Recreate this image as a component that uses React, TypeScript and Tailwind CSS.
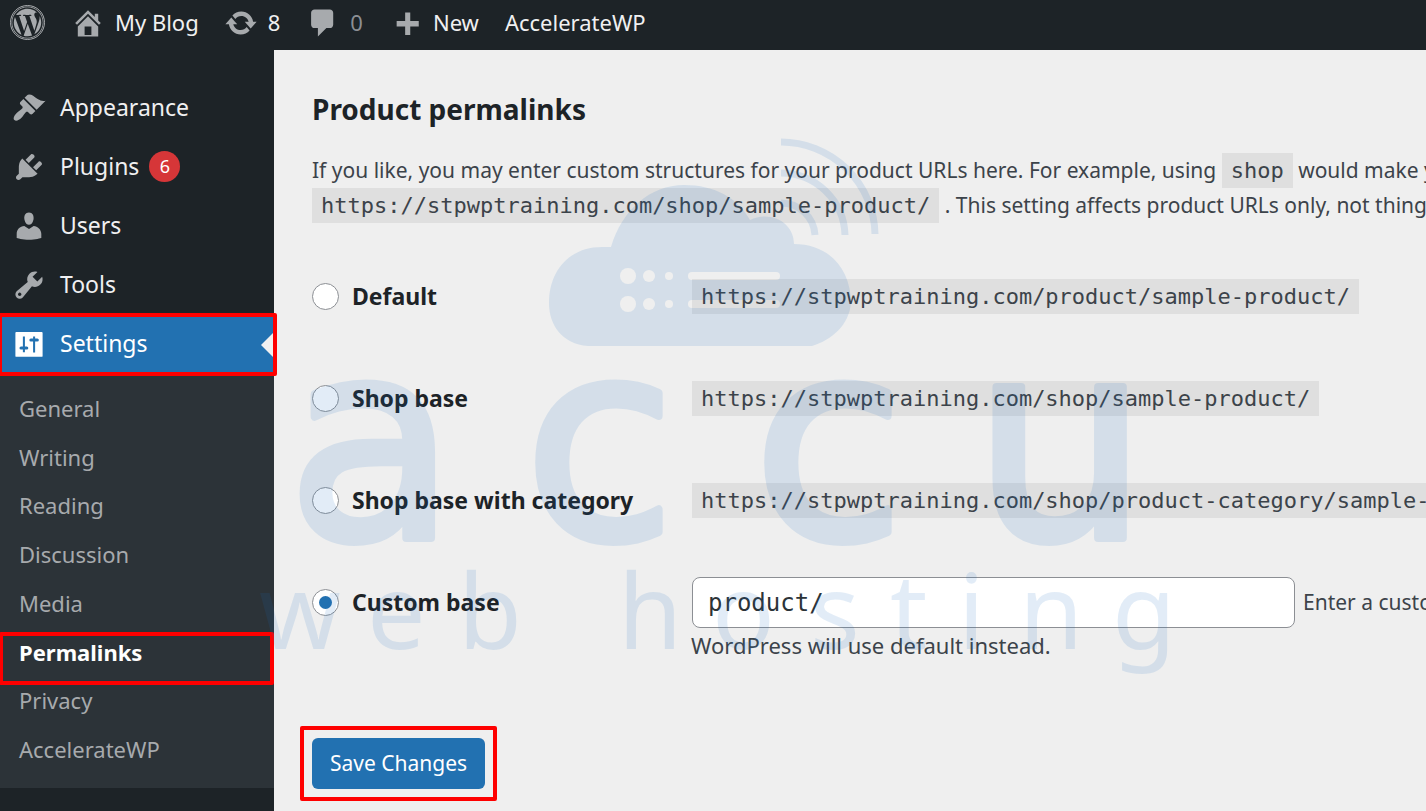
import React, { useState } from 'react';
import { FaWordpress } from 'react-icons/fa';

const icons = {
  home: 'M16 8.5l1.53 1.53-1.06 1.06L10 4.6l-6.47 6.49-1.06-1.06L10 2.5l4 4v-2h2v4zm-6-2.46l6 5.99V18H4v-5.97zM12 17v-5H8v5h4z',
  update: 'M10.2 3.28c3.53 0 6.43 2.61 6.92 6h2.08l-3.5 4-3.5-4h2.32c-.45-1.97-2.21-3.45-4.32-3.45-1.45 0-2.73.71-3.54 1.78L4.95 5.66C6.23 4.2 8.11 3.28 10.2 3.28zm-.4 13.44c-3.52 0-6.43-2.61-6.92-6H.8l3.5-4c1.17 1.33 2.33 2.67 3.5 4H5.48c.45 1.97 2.21 3.45 4.32 3.45 1.45 0 2.73-.71 3.54-1.78l1.71 1.95c-1.28 1.46-3.15 2.38-5.25 2.38z',
  comment: 'M5 2h9c1.1 0 2 .9 2 2v7c0 1.1-.9 2-2 2h-2l-5 5v-5H5c-1.1 0-2-.9-2-2V4c0-1.1.9-2 2-2z',
  plus: 'M17.5 8.8v3.2h-5v5h-3v-5h-5V8.8h5v-5h3v5z',
  appearance: 'M14.48 11.06L7.41 3.99l1.5-1.5c.5-.56 2.3-.47 3.51.32 1.21.8 1.43 1.28 2.91 2.1 1.18.64 2.45 1.26 4.45.85zm-.71.71L6.7 4.7 4.93 6.47c-.39.39-.39 1.02 0 1.41l1.06 1.06c.39.39.39 1.03 0 1.42-.6.6-1.43 1.11-2.21 1.69-.35.26-.7.53-1.01.84C1.43 14.23.4 16.08 1.4 17.07c.99 1 2.84-.03 4.18-1.36.31-.31.58-.66.85-1.02.57-.78 1.08-1.61 1.69-2.21.39-.39 1.02-.39 1.41 0l1.06 1.06c.39.39 1.02.39 1.41 0z',
  plugins: 'M13.11 4.36L9.87 7.6 8 5.73l3.24-3.24c.35-.34 1.05-.2 1.56.32.52.51.66 1.21.31 1.55zm-8 1.77l.91-1.12 9.01 9.01-1.19.84c-.71.71-2.63 1.16-3.82 1.16H6.14L4.9 17.26c-.59.59-1.54.59-2.12 0-.59-.58-.59-1.53 0-2.12l1.24-1.24v-3.88c0-1.13.4-3.19 1.09-3.89zm7.26 3.97l3.24-3.24c.34-.35 1.04-.21 1.55.31.52.51.66 1.21.31 1.55l-3.24 3.25z',
  users: 'M10 9.25c-2.27 0-2.73-3.44-2.73-3.44C7 4.02 7.82 2 9.97 2c2.16 0 2.98 2.02 2.71 3.81 0 0-.41 3.44-2.68 3.44zm0 2.57L12.72 10c2.39 0 4.52 2.33 4.52 4.53v2.49s-3.65 1.13-7.24 1.13c-3.65 0-7.24-1.13-7.24-1.13v-2.49c0-2.25 1.94-4.48 4.47-4.48z',
  tools: 'M16.68 9.77c-1.34 1.34-3.3 1.67-4.95.99l-5.41 6.52c-.99.99-2.59.99-3.58 0s-.99-2.59 0-3.57l6.52-5.42c-.68-1.65-.35-3.61.99-4.95 1.28-1.28 3.12-1.62 4.72-1.06l-2.89 2.89 2.82 2.82 2.86-2.87c.53 1.58.18 3.39-1.08 4.65zM3.81 16.21c.4.39 1.04.39 1.43 0 .4-.4.4-1.04 0-1.43-.39-.4-1.03-.4-1.43 0-.39.39-.39 1.03 0 1.43z',
  settings: 'M2.5 3h15a.5.5 0 0 1 .5.5v13.5a.5.5 0 0 1-.5.5h-15a.5.5 0 0 1-.5-.5V3.5a.5.5 0 0 1 .5-.5zM6.4 5.6v5.8H5.3a.9.9 0 0 0 0 1.8h1.1v1.7h1.2v-1.7h1.1a.9.9 0 0 0 0-1.8H7.6V5.6zM12.4 5.6v1.2h-1.3a.9.9 0 0 0 0 1.8h1.3v6.4h1.2V8.6h1.3a.9.9 0 0 0 0-1.8h-1.3V5.6z',
};

type IconName = keyof typeof icons;

const Icon = ({ name }: { name: IconName }) => (
  <svg viewBox="0 0 20 20" className="size-[34px] shrink-0" fill="currentColor" fillRule="evenodd" aria-hidden="true">
    <path d={icons[name]} />
  </svg>
);

const menu: { label: string; icon: IconName; count?: number }[] = [
  { label: 'Appearance', icon: 'appearance' },
  { label: 'Plugins', icon: 'plugins', count: 6 },
  { label: 'Users', icon: 'users' },
  { label: 'Tools', icon: 'tools' },
  { label: 'Settings', icon: 'settings' },
];

const submenu = ['General', 'Writing', 'Reading', 'Discussion', 'Media', 'Permalinks', 'Privacy', 'AccelerateWP'];

const structures = [
  { id: 'default', label: 'Default', url: 'https://stpwptraining.com/product/sample-product/' },
  { id: 'shop', label: 'Shop base', url: 'https://stpwptraining.com/shop/sample-product/' },
  { id: 'category', label: 'Shop base with category', url: 'https://stpwptraining.com/shop/product-category/sample-product/' },
  { id: 'custom', label: 'Custom base' },
];

const AdminBar = () => (
  <header className="flex h-[50px] items-center bg-[#1d2327] pb-[5px] pl-[10px] text-[22px] whitespace-nowrap text-[#f0f0f1]">
    <a href="#about" aria-label="About WordPress" className="text-[#a7aaad]">
      <FaWordpress className="size-[35px] rounded-full border border-current" />
    </a>
    <a href="#site" className="ml-[26px] flex items-center gap-[10px]">
      <span className="text-[#a7aaad]"><Icon name="home" /></span>
      My Blog
    </a>
    <a href="#updates" className="ml-[25px] flex items-center gap-[10px]">
      <span className="text-[#a7aaad]"><Icon name="update" /></span>
      8
    </a>
    <a href="#comments" className="ml-[26px] flex items-center gap-[10px] text-[#8c8f94]">
      <span className="text-[#a7aaad]"><Icon name="comment" /></span>
      0
    </a>
    <a href="#new" className="ml-[26px] flex items-center gap-[10px]">
      <span className="text-[#a7aaad]"><Icon name="plus" /></span>
      New
    </a>
    <a href="#accelerate" className="ml-[26px]">AccelerateWP</a>
  </header>
);

const Sidebar = () => (
  <nav className="w-[274px] shrink-0 bg-[#1d2327] pt-[29px]" aria-label="Main menu">
    <ul>
      {menu.map(item => {
        const active = item.label === 'Settings';
        return (
          <li key={item.label} className="relative">
            <a
              href={`#${item.label.toLowerCase()}`}
              className={`flex h-[59px] items-center pb-[2px] pl-[12px] text-[23px] ${active ? 'bg-[#2271b1] text-white' : 'text-[#f0f0f1]'}`}
            >
              <span className={active ? 'text-white' : 'text-[#a7aaad]'}><Icon name={item.icon} /></span>
              <span className="ml-[14px]">{item.label}</span>
              {item.count && (
                <span className="ml-[10px] flex size-[31px] items-center justify-center rounded-full bg-[#d63638] text-[18px] text-white">
                  {item.count}
                </span>
              )}
            </a>
            {active && (
              <>
                <span className="absolute top-1/2 right-0 -translate-y-1/2 border-y-[13px] border-r-[13px] border-y-transparent border-r-[#f0f0f1]" />
                <span className="absolute -inset-y-[2px] -right-[3px] -left-[2px] z-10 rounded-xs border-4 border-[#fe0000]" />
              </>
            )}
          </li>
        );
      })}
    </ul>
    <ul className="flex min-h-[414px] flex-col bg-[#2c3338] pt-[10px] pb-[14px] text-[22px] text-[#a7aaad]">
      {submenu.map(label => {
        const current = label === 'Permalinks';
        return (
          <li key={label} className="relative flex flex-1 items-center">
            <a href={`#${label.toLowerCase()}`} className={`pl-[19px] ${current ? 'font-bold text-white' : ''}`}>
              {label}
            </a>
            {current && <span className="absolute top-1 right-0 -bottom-2 -left-px rounded-xs border-4 border-[#fe0000]" />}
          </li>
        );
      })}
    </ul>
  </nav>
);

const Code = ({ children }: { children: React.ReactNode }) => (
  <code className="bg-[#dfdfdf] px-[9px] py-[5px] font-['DejaVu_Sans_Mono',monospace] text-[22px] leading-[25px]">
    {children}
  </code>
);

const Watermark = () => (
  <svg
    className="pointer-events-none absolute top-[130px] left-[250px] z-20 h-[560px] w-[930px] opacity-[0.12]"
    viewBox="250 130 930 560"
    fill="#1a6cc0"
    aria-hidden="true"
  >
    <mask id="slots">
      <rect x="540" y="130" width="330" height="230" fill="white" />
      <circle cx="628" cy="276" r="8" fill="black" />
      <circle cx="649" cy="276" r="6" fill="black" />
      <circle cx="669" cy="276" r="4" fill="black" />
      <rect x="688" y="272" width="92" height="8" rx="4" fill="black" />
      <circle cx="628" cy="304" r="8" fill="black" />
      <circle cx="649" cy="304" r="6" fill="black" />
      <circle cx="669" cy="304" r="4" fill="black" />
      <rect x="688" y="300" width="92" height="8" rx="4" fill="black" />
    </mask>
    <path
      mask="url(#slots)"
      d="M588 346C562 344 549 325 549 303C549 270 570 247 602 247H611C622 210 650 185 684 185C715 185 738 198 750 220C770 210 794 222 794 244C830 244 851 270 851 303C849 325 832 340 812 346Z"
    />
    <g fill="none" stroke="#1a6cc0" strokeWidth="7">
      <path d="M781 142A94 94 0 0 1 875 234" />
      <path d="M781 173A64 64 0 0 1 845 235" />
      <path d="M781 203A34 34 0 0 1 815 235" />
    </g>
    <text y="538" x="287 524 753 973" fontFamily="DejaVu Sans, sans-serif" fontSize="276" stroke="#1a6cc0" strokeWidth="8" strokeLinejoin="round">
      accu
    </text>
    <text y="649" x="259 367 458 545 618 712 810 890 958 1019 1112" fontFamily="Noto Sans, sans-serif" fontSize="104">
      web hosting
    </text>
  </svg>
);

const App = () => {
  const [selected, setSelected] = useState('custom');
  const [base, setBase] = useState('product/');

  return (
    <div className="relative flex min-h-screen flex-col overflow-hidden bg-[#efefef] font-['Noto_Sans',sans-serif] text-[#3c434a]">
      <AdminBar />
      <div className="flex flex-1">
        <Sidebar />
        <main className="min-w-0 flex-1 overflow-hidden pl-[38px] whitespace-nowrap">
          <h2 className="mt-[41px] text-[28px] leading-9 font-bold text-[#1d2327]">Product permalinks</h2>
          <p className="mt-[26px] text-[21px] leading-[35px]">
            If you like, you may enter custom structures for your product URLs here. For example, using <Code>shop</Code> would make your product links like
            <br />
            <Code>https://stpwptraining.com/shop/sample-product/</Code> . This setting affects product URLs only, not things such as attributes.
          </p>
          <form onSubmit={e => e.preventDefault()}>
            <div className="mt-12 flex flex-col gap-[51px] text-[21px]">
              {structures.map(s => (
                <div key={s.id} className="flex h-[51px] items-center">
                  <label className="flex w-[380px] shrink-0 items-center gap-[13px] text-[23px] font-bold text-[#1d2327]">
                    <input
                      type="radio"
                      name="structure"
                      value={s.id}
                      checked={selected === s.id}
                      onChange={() => setSelected(s.id)}
                      className="flex size-[27px] appearance-none items-center justify-center rounded-full border border-[#8c8f94] bg-white before:size-[13px] before:rounded-full checked:before:bg-[#2271b1] checked:before:content-['']"
                    />
                    {s.label}
                  </label>
                  {s.url ? (
                    <Code>{s.url}</Code>
                  ) : (
                    <>
                      <input
                        type="text"
                        value={base}
                        onChange={e => setBase(e.target.value)}
                        aria-label="Custom base path"
                        className="h-[51px] w-[603px] shrink-0 rounded-lg border border-[#8c8f94] bg-white px-[15px] font-['DejaVu_Sans_Mono',monospace] text-[24px] text-[#2c3338]"
                      />
                      <span className="ml-2">Enter a custom base to use. A base must be set or</span>
                    </>
                  )}
                </div>
              ))}
            </div>
            <p className="pl-[379px] text-[22px] leading-[35px]">WordPress will use default instead.</p>
            <div className="mt-[63px] -ml-3 inline-block rounded-xs border-4 border-[#fe0000] p-2">
              <button type="submit" className="block h-[51px] rounded-md bg-[#2271b1] px-[18px] text-[21px] text-white">
                Save Changes
              </button>
            </div>
          </form>
        </main>
      </div>
      <Watermark />
    </div>
  );
};

export default App;
